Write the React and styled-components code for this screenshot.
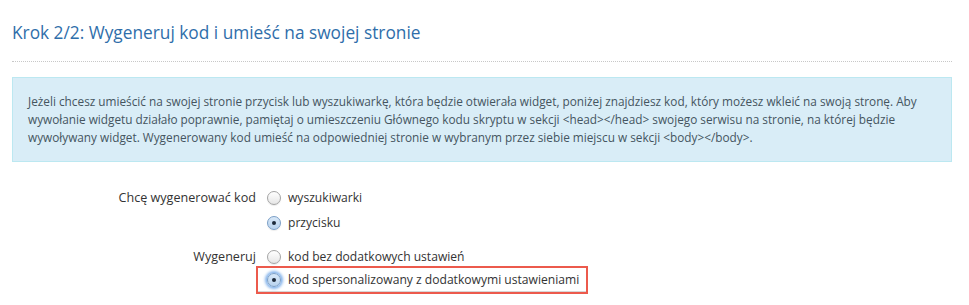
import React from "react";
import styled, { createGlobalStyle } from "styled-components";

const GlobalStyle = createGlobalStyle`
  body {
    margin: 0;
    background: #fff;
    font-family: "Open Sans", "Liberation Sans", sans-serif;
    color: #333;
  }
`;

const Page = styled.div`
  padding: 20px 17px 0 12px;
`;

const Title = styled.h2`
  margin: 0;
  font-size: 17.3px;
  font-weight: 400;
  line-height: 26px;
  color: #2f6eaa;
  padding-bottom: 15px;
  border-bottom: 1px dotted #c8c8c8;
`;

const InfoBox = styled.div`
  margin-top: 15px;
  padding: 14px 15px 15px;
  background: #d9edf7;
  border: 1px solid #bce8f1;
  color: #45555f;
  font-size: 11.8px;
  line-height: 18px;
`;

const Form = styled.div`
  margin-top: 25px;
  display: grid;
  grid-template-columns: 244px 1fr;
  column-gap: 9px;
  row-gap: 10px;
`;

const Label = styled.div`
  text-align: right;
  font-size: 12.6px;
  line-height: 22px;
  color: #333;
`;

const Options = styled.div`
  display: flex;
  flex-direction: column;
  gap: ${(p) => p.$gap}px;
  margin-bottom: ${(p) => p.$after}px;
`;

const Option = styled.label`
  display: flex;
  align-items: center;
  gap: 7px;
  font-size: 12.1px;
  line-height: 20px;
  height: 22px;
  width: max-content;
  padding: ${(p) => (p.$marked ? "1px 7px 1px 9px" : "0 0 0 2px")};
  margin: ${(p) => (p.$marked ? "-2px 0 0 -9px" : "0")};
  border: ${(p) => (p.$marked ? "2px solid #ec5a4c" : "none")};
  box-shadow: ${(p) => (p.$marked ? "inset 0 -1px 0 #d6d6d6" : "none")};
  color: #333;
`;

const Radio = styled.span`
  position: relative;
  flex: none;
  width: 14px;
  height: 14px;
  border-radius: 50%;
  border: 1px solid ${(p) => (p.$checked ? "#7a9ec6" : "#a4a4a4")};
  background: ${(p) =>
    p.$checked
      ? "linear-gradient(#d8e8f8, #b9d3ee)"
      : "linear-gradient(#ffffff, #e6e6e6)"};
  box-sizing: border-box;
  box-shadow: ${(p) =>
    p.$focus ? "0 0 3px 2px #7fb0ea" : "0 1px 1px rgba(0,0,0,0.08)"};

  &::after {
    content: "";
    display: ${(p) => (p.$checked ? "block" : "none")};
    position: absolute;
    left: 50%;
    top: 50%;
    width: 4px;
    height: 4px;
    margin: -2px 0 0 -2px;
    border-radius: 50%;
    background: #1d2a3a;
  }
`;

export default function App() {
  return (
    <>
      <GlobalStyle />
      <Page>
        <Title>Krok 2/2: Wygeneruj kod i umieść na swojej stronie</Title>
        <InfoBox>
          Jeżeli chcesz umieścić na swojej stronie przycisk lub wyszukiwarkę,
          która będzie otwierała widget, poniżej znajdziesz kod, który możesz
          wkleić na swoją stronę. Aby wywołanie widgetu działało poprawnie,
          pamiętaj o umieszczeniu Głównego kodu skryptu w sekcji
          &lt;head&gt;&lt;/head&gt; swojego serwisu na stronie, na której będzie
          wywoływany widget. Wygenerowany kod umieść na odpowiedniej stronie w
          wybranym przez siebie miejscu w sekcji &lt;body&gt;&lt;/body&gt;.
        </InfoBox>
        <Form>
          <Label>Chcę wygenerować kod</Label>
          <Options $gap={3} $after={2}>
            <Option>
              <Radio />
              wyszukiwarki
            </Option>
            <Option>
              <Radio $checked />
              przycisku
            </Option>
          </Options>
          <Label>Wygeneruj</Label>
          <Options $gap={0} $after={0}>
            <Option>
              <Radio />
              kod bez dodatkowych ustawień
            </Option>
            <Option $marked>
              <Radio $checked $focus />
              kod spersonalizowany z dodatkowymi ustawieniami
            </Option>
          </Options>
        </Form>
      </Page>
    </>
  );
}
